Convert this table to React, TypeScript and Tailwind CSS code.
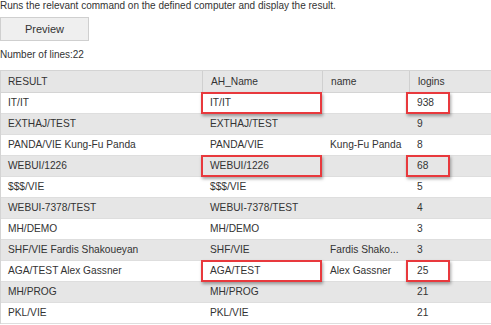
import React from 'react';

type Row = { result: string; ah: string; name: string; logins: string; mark?: boolean };

const rows: Row[] = [
  { result: 'IT/IT', ah: 'IT/IT', name: '', logins: '938', mark: true },
  { result: 'EXTHAJ/TEST', ah: 'EXTHAJ/TEST', name: '', logins: '9' },
  { result: 'PANDA/VIE Kung-Fu Panda', ah: 'PANDA/VIE', name: 'Kung-Fu Panda', logins: '8' },
  { result: 'WEBUI/1226', ah: 'WEBUI/1226', name: '', logins: '68', mark: true },
  { result: '$$$/VIE', ah: '$$$/VIE', name: '', logins: '5' },
  { result: 'WEBUI-7378/TEST', ah: 'WEBUI-7378/TEST', name: '', logins: '4' },
  { result: 'MH/DEMO', ah: 'MH/DEMO', name: '', logins: '3' },
  { result: 'SHF/VIE Fardis Shakoueyan', ah: 'SHF/VIE', name: 'Fardis Shako...', logins: '3' },
  { result: 'AGA/TEST Alex Gassner', ah: 'AGA/TEST', name: 'Alex Gassner', logins: '25', mark: true },
  { result: 'MH/PROG', ah: 'MH/PROG', name: '', logins: '21' },
  { result: 'PKL/VIE', ah: 'PKL/VIE', name: '', logins: '21' },
];

const box = 'absolute border-2 border-[#e8393d] shadow-[1px_2px_3px_rgba(0,0,0,0.35)] pointer-events-none';

export default function App() {
  return (
    <div className="w-[491px] h-[325px] overflow-hidden bg-white text-[#333] text-[10px] font-['Liberation_Sans',Arial,sans-serif]">
      <div className="leading-[12px] whitespace-nowrap">Runs the relevant command on the defined computer and display the result.</div>
      <button className="mt-[5px] block w-[89px] h-[24px] bg-[#efefef] border border-[#cfcfcf] text-[11px] text-[#333]">
        Preview
      </button>
      <div className="mt-[8px] leading-[12px]">Number of lines:22</div>

      <div className="mt-[9px] border-l border-t border-[#d4d4d4] w-[491px]">
        <div className="grid grid-cols-[201px_120px_87px_83px] h-[22px] bg-[#e6e6e6] text-[10.2px] border-b border-[#d4d4d4]">
          <div className="pl-[7px] flex items-center">RESULT</div>
          <div className="pl-[8px] flex items-center border-l border-[#d0d0d0]">AH_Name</div>
          <div className="pl-[8px] flex items-center border-l border-[#d0d0d0]">name</div>
          <div className="pl-[8px] flex items-center border-l border-[#d0d0d0]">logins</div>
        </div>
        {rows.map((r, i) => (
          <div
            key={i}
            className={`grid grid-cols-[201px_120px_87px_83px] h-[21px] text-[10.2px] whitespace-nowrap border-b border-[#dedede] ${i % 2 === 1 ? 'bg-[#e6e6e6]' : 'bg-white'}`}
          >
            <div className="pl-[7px] flex items-center">{r.result}</div>
            <div className="pl-[8px] flex items-center relative">
              {r.ah}
              {r.mark && <div className={`${box} -left-[1px] -top-[1px] w-[121px] h-[22px]`} />}
            </div>
            <div className="pl-[8px] flex items-center overflow-hidden">{r.name}</div>
            <div className="pl-[8px] flex items-center relative">
              {r.logins}
              {r.mark && <div className={`${box} -left-[3px] -top-[1px] w-[44px] h-[22px]`} />}
            </div>
          </div>
        ))}
      </div>
    </div>
  );
}
